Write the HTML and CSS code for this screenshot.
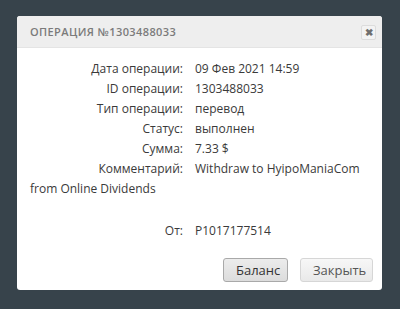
FILE: index.html
```html
<!DOCTYPE html>
<html lang="ru">
<head>
	<meta charset="UTF-8">
	<title>Операция</title>
	<link rel="stylesheet" href="styles.css">
</head>
<body>
	<div class="modal">
		<div class="modal-head">
			<span class="modal-title">ОПЕРАЦИЯ №1303488033</span>
			<span class="modal-close">&#x2716;</span>
		</div>
		<div class="modal-body">
			<div class="row"><span class="lbl">Дата операции:</span>09 Фев 2021 14:59</div>
			<div class="row"><span class="lbl">ID операции:</span>1303488033</div>
			<div class="row"><span class="lbl">Тип операции:</span>перевод</div>
			<div class="row"><span class="lbl">Статус:</span>выполнен</div>
			<div class="row"><span class="lbl">Сумма:</span>7.33 $</div>
			<div class="row"><span class="lbl">Комментарий:</span>Withdraw to HyipoManiaCom from Online Dividends</div>
			<div class="row row-from"><span class="lbl">От:</span>P1017177514</div>
		</div>
		<div class="modal-foot">
			<button class="btn btn-active">Баланс</button>
			<button class="btn">Закрыть</button>
		</div>
	</div>
</body>
</html>
```

FILE: styles.css
```css
*{box-sizing: border-box;}
body{
	margin: 0;
	padding: 16px 0 0 17px;
	background: #37434b;
	font-family: "Open Sans", sans-serif;
}
.modal{
	width: 365px;
	height: 274px;
	background: #fff;
	border-radius: 3px;
	display: flex;
	flex-direction: column;
	overflow: hidden;
}
.modal-head{
	height: 32px;
	background: #eeeeee;
	border-bottom: 1px solid #e4e4e4;
	display: flex;
	align-items: center;
	justify-content: space-between;
	padding: 0 6px 0 13px;
}
.modal-title{
	font-size: 11px;
	font-weight: 600;
	letter-spacing: 0.4px;
	color: #7b7b7b;
}
.modal-close{
	width: 15px;
	height: 15px;
	margin-top: 1px;
	border: 1px solid #dcdcdc;
	border-radius: 2px;
	background: #f3f3f3;
	color: #6f6f6f;
	font-size: 10px;
	font-weight: bold;
	line-height: 13px;
	text-align: center;
}
.modal-body{
	padding: 11px 13px 0;
	font-size: 12px;
	line-height: 20px;
	color: #3a3a3a;
}
.lbl{
	display: inline-block;
	width: 153px;
	margin-right: 12px;
	text-align: right;
}
.row-from{
	margin-top: 22px;
}
.modal-foot{
	margin-top: auto;
	display: flex;
	justify-content: flex-end;
	gap: 12px;
	padding: 0 9px 8px;
}
.btn{
	height: 24px;
	padding: 0 12px;
	font-family: "Open Sans", sans-serif;
	font-size: 13px;
	color: #555;
	background: linear-gradient(#f7f7f7, #e9e9e9);
	border: 1px solid #d6d6d6;
	border-radius: 3px;
}
.btn-active{
	width: 65px;
	color: #333;
	background: linear-gradient(#ececec, #dcdcdc);
	border-color: #a9a9a9;
}
.btn + .btn{
	width: 73px;
}
```
